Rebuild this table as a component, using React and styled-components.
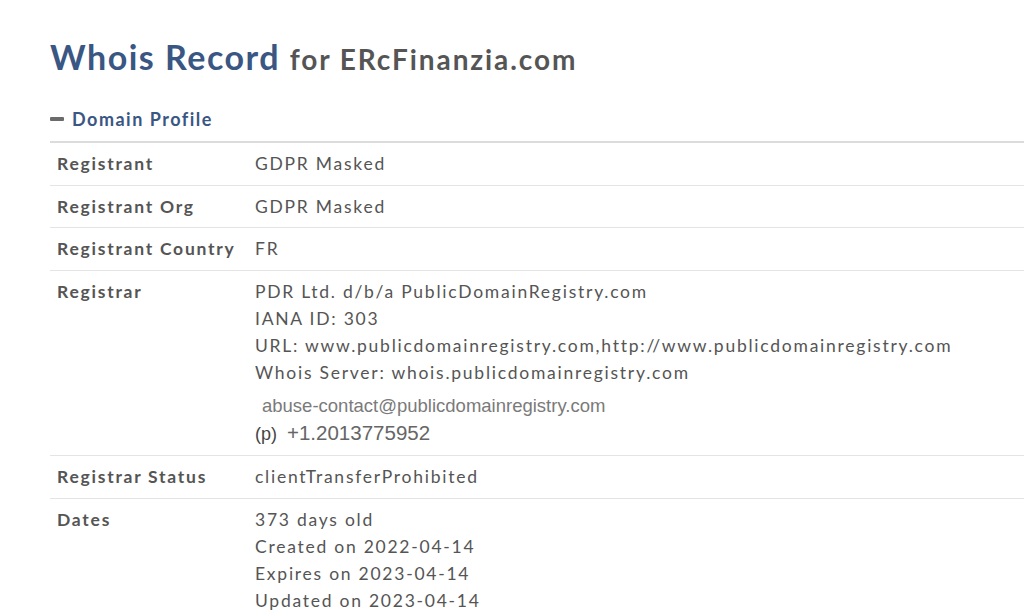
import React from 'react';
import styled, { createGlobalStyle } from 'styled-components';

const GlobalStyle = createGlobalStyle`
  body {
    margin: 0;
    background: #ffffff;
    font-family: Lato, "Noto Sans", sans-serif;
    color: #555555;
  }
`;

const Page = styled.div`
  padding: 35px 0 0 50px;
  overflow: hidden;
  height: 614px;
  box-sizing: border-box;
`;

const Title = styled.h1`
  margin: 0;
  font-size: 34px;
  font-weight: 700;
  color: #3a5683;
  line-height: 44px;
  letter-spacing: 1.5px;
  white-space: nowrap;
`;

const TitleSub = styled.small`
  font-size: 28px;
  color: #555555;
  letter-spacing: 1.9px;
`;

const SectionHead = styled.div`
  display: flex;
  align-items: center;
  gap: 8px;
  margin-top: 26px;
  height: 24px;
  font-size: 18px;
  font-weight: 700;
  letter-spacing: 1.5px;
  color: #3a5683;
`;

const Minus = styled.span`
  width: 14px;
  height: 4px;
  background: #6b6b6b;
  border-radius: 1px;
`;

const Table = styled.div`
  margin-top: 10px;
  border-top: 2px solid #dcdcdc;
  width: 1100px;
`;

const Row = styled.div`
  display: grid;
  grid-template-columns: 198px 1fr;
  padding: 7.25px 0 7.25px 7px;
  border-bottom: 1px solid #e4e4e4;
  font-size: 17.5px;
  line-height: 27px;
`;

const Label = styled.div`
  font-weight: 700;
  color: #555555;
  letter-spacing: 1.75px;
`;

const Value = styled.div`
  color: #555555;
  letter-spacing: 1.75px;
`;

const Line = styled.div``;

const Email = styled.div`
  font-family: "Liberation Sans", Arial, sans-serif;
  font-size: 18.5px;
  color: #7a7a7a;
  letter-spacing: 0;
  padding: 6px 0 0 7px;
  line-height: 27px;
`;

const Phone = styled.div`
  display: flex;
  align-items: baseline;
  gap: 10px;
  font-family: "Liberation Sans", Arial, sans-serif;
  letter-spacing: 0;
  line-height: 28px;
`;

const PhoneTag = styled.span`
  font-size: 18px;
  color: #444444;
`;

const PhoneNumber = styled.span`
  font-size: 20.5px;
  color: #666666;
`;

const rows = [
  { label: 'Registrant', lines: ['GDPR Masked'] },
  { label: 'Registrant Org', lines: ['GDPR Masked'] },
  { label: 'Registrant Country', lines: ['FR'] },
  {
    label: 'Registrar',
    lines: [
      'PDR Ltd. d/b/a PublicDomainRegistry.com',
      'IANA ID: 303',
      'URL: www.publicdomainregistry.com,http://www.publicdomainregistry.com',
      'Whois Server: whois.publicdomainregistry.com',
    ],
    contact: true,
  },
  { label: 'Registrar Status', lines: ['clientTransferProhibited'] },
  {
    label: 'Dates',
    lines: [
      '373 days old',
      'Created on 2022-04-14',
      'Expires on 2023-04-14',
      'Updated on 2023-04-14',
    ],
  },
];

export default function App() {
  return (
    <>
      <GlobalStyle />
      <Page>
        <Title>
          Whois Record <TitleSub>for ERcFinanzia.com</TitleSub>
        </Title>
        <SectionHead>
          <Minus />
          Domain Profile
        </SectionHead>
        <Table>
          {rows.map(row => (
            <Row key={row.label}>
              <Label>{row.label}</Label>
              <Value>
                {row.lines.map(line => (
                  <Line key={line}>{line}</Line>
                ))}
                {row.contact && (
                  <>
                    <Email>abuse-contact@publicdomainregistry.com</Email>
                    <Phone>
                      <PhoneTag>(p)</PhoneTag>
                      <PhoneNumber>+1.2013775952</PhoneNumber>
                    </Phone>
                  </>
                )}
              </Value>
            </Row>
          ))}
        </Table>
      </Page>
    </>
  );
}
